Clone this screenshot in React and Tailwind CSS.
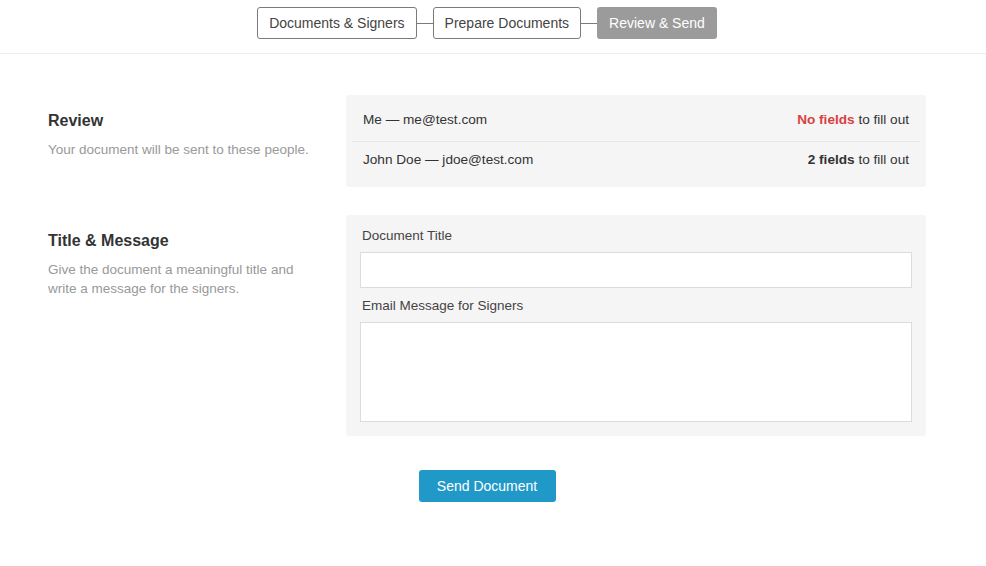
import React from 'react'

const font = { fontFamily: '"Liberation Sans", Arial, sans-serif' }

function Step({ label, active }) {
  return (
    <div
      className={
        active
          ? 'flex h-[32px] items-center rounded-[3px] bg-[#9b9b9b] px-[12px] text-[14px] text-white'
          : 'flex h-[32px] items-center rounded-[3px] border border-[#7a7a7a] bg-white px-[11px] text-[14px] text-[#444]'
      }
    >
      {label}
    </div>
  )
}

function Connector() {
  return <div className="h-px w-[16px] bg-[#7a7a7a]" />
}

function SectionIntro({ title, children }) {
  return (
    <div className="w-[298px] shrink-0 pt-[17px]">
      <h2 className="text-[16px] leading-[18px] font-bold text-[#333]">{title}</h2>
      <p className="mt-[10px] pr-[36px] text-[13.5px] leading-[19px] text-[#999]">{children}</p>
    </div>
  )
}

function SignerRow({ name, email, count, last }) {
  return (
    <div
      className={
        'flex items-center justify-between px-[11px] text-[13.6px] text-[#333] ' +
        (last ? 'h-[37px]' : 'h-[42px] border-b border-[#e6e6e6]')
      }
    >
      <span>
        {name} — {email}
      </span>
      <span>
        {count === 0 ? (
          <span className="font-bold text-[#d9413f]">No fields</span>
        ) : (
          <span className="font-bold">{count} fields</span>
        )}{' '}
        to fill out
      </span>
    </div>
  )
}

export default function App() {
  return (
    <div className="min-h-[566px] w-full bg-white" style={font}>
      <header className="border-b border-[#ececec]">
        <div className="flex w-[974px] items-center justify-center pt-[7px] pb-[14px]">
          <Step label="Documents & Signers" />
          <Connector />
          <Step label="Prepare Documents" />
          <Connector />
          <Step label="Review & Send" active />
        </div>
      </header>

      <div className="w-[974px]">
        <main className="mx-auto w-[878px] pt-[41px]">
          <section className="flex">
            <SectionIntro title="Review">Your document will be sent to these people.</SectionIntro>
            <div className="w-[580px] rounded-[3px] bg-[#f5f5f5] px-[6px] pt-[5px] pb-[8px]">
              <SignerRow name="Me" email="me@test.com" count={0} />
              <SignerRow name="John Doe" email="jdoe@test.com" count={2} last />
            </div>
          </section>

          <section className="mt-[28px] flex">
            <SectionIntro title="Title & Message">
              Give the document a meaningful title and write a message for the signers.
            </SectionIntro>
            <div className="w-[580px] rounded-[3px] bg-[#f5f5f5] px-[14px] pt-[13px] pb-[14px]">
              <label className="block px-[2px] text-[13.5px] leading-[16px] text-[#444]">Document Title</label>
              <input
                type="text"
                className="mt-[8px] block h-[36px] w-full border border-[#dcdcdc] bg-white px-[8px] text-[14px] outline-none"
              />
              <label className="mt-[10px] block px-[2px] text-[13.5px] leading-[16px] text-[#444]">
                Email Message for Signers
              </label>
              <textarea className="mt-[8px] block h-[100px] w-full resize-none border border-[#dcdcdc] bg-white px-[8px] text-[14px] outline-none" />
            </div>
          </section>

          <div className="mt-[34px] flex justify-center">
            <button
              type="button"
              className="h-[32px] w-[137px] rounded-[3px] bg-[#2199c8] text-[14px] text-white"
            >
              Send Document
            </button>
          </div>
        </main>
      </div>
    </div>
  )
}
